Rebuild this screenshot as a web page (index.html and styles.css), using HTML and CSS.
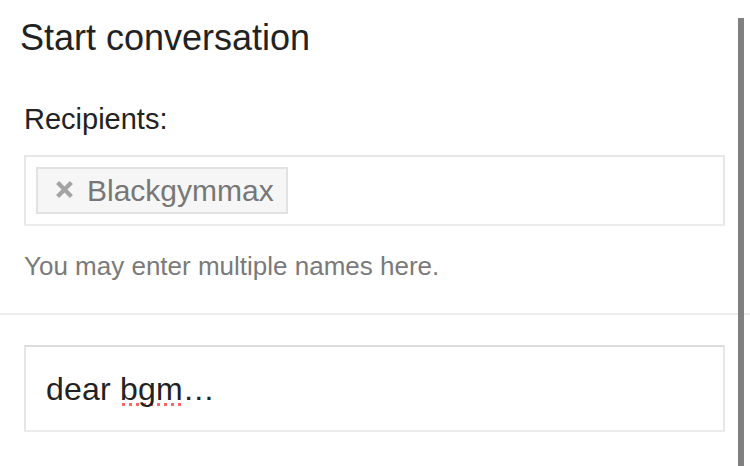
FILE: index.html
```html
<!DOCTYPE html>
<html lang="en">
<head>
    <meta charset="UTF-8">
    <meta name="viewport" content="width=device-width, initial-scale=1.0">
    <title>Start conversation</title>
    <link rel="stylesheet" href="styles.css">
</head>
<body>
    <div class="sheet">
        <!-- Recipients -->
        <div class="top">
            <h1>Start conversation</h1>
            <div class="field">
                <label class="field-label">Recipients:</label>
                <div class="token-box">
                    <span class="token">
                        <svg class="token-x" viewBox="0 0 16 16">
                            <path d="M1.5 1.5 L14.5 14.5 M14.5 1.5 L1.5 14.5" stroke="currentColor" stroke-width="4" fill="none"/>
                        </svg>
                        Blackgymmax
                    </span>
                </div>
                <p class="hint">You may enter multiple names here.</p>
            </div>
        </div>

        <!-- Message -->
        <div class="message">
            <div class="message-box">dear <span class="misspelled">bgm</span>…</div>
        </div>

        <div class="scroll-thumb"></div>
    </div>
</body>
</html>
```

FILE: styles.css
```css
html, body {
    height: 100%;
}

body {
    margin: 0;
    overflow: hidden;
    background-color: #ffffff;
    font-family: "Liberation Sans", Arial, Helvetica, sans-serif;
    color: #222;
}

.sheet {
    position: relative;
    height: 100%;
}

.top {
    padding: 0 25px 32px 20px;
    border-bottom: 2px solid #ececec;
}

h1 {
    margin: 18px 0 0;
    font-size: 36px;
    line-height: 40px;
    font-weight: normal;
    color: #222;
}

.field {
    padding-left: 4px;
}

.field-label {
    display: block;
    margin-top: 44px;
    font-size: 29px;
    line-height: 34px;
    color: #222;
}

.token-box {
    margin-top: 19px;
    padding: 10px;
    border: 2px solid #e7e7e7;
    border-bottom-color: #ececec;
}

.token {
    display: inline-flex;
    align-items: center;
    gap: 14px;
    height: 43px;
    padding: 0 12px 0 18px;
    border: 2px solid #e2e2e2;
    background-color: #f6f6f6;
    font-size: 30px;
    color: #777;
}

    .token-x {
        flex-shrink: 0;
        width: 17px;
        height: 17px;
        margin-top: -2px;
        color: #a4a4a4;
    }

.hint {
    margin: 25px 0 0;
    font-size: 26px;
    line-height: 30px;
    color: #7a7a7a;
}

.message {
    padding: 30px 25px 0 24px;
}

.message-box {
    padding: 24px 20px 23px;
    border: 2px solid #e6e6e6;
    border-top-color: #dcdcdc;
    border-bottom-color: #ececec;
    font-size: 32px;
    line-height: 36px;
    letter-spacing: 0.2px;
    color: #222;
}

.misspelled {
    background-image: radial-gradient(circle, #ff6666 1.7px, transparent 2px);
    background-size: 7px 5px;
    background-repeat: repeat-x;
    background-position: 0 100%;
}

/* overlay scroll indicator */
.scroll-thumb {
    position: absolute;
    top: 0;
    right: 6px;
    bottom: 1px;
    width: 6px;
    background-color: #808080;
}
```
